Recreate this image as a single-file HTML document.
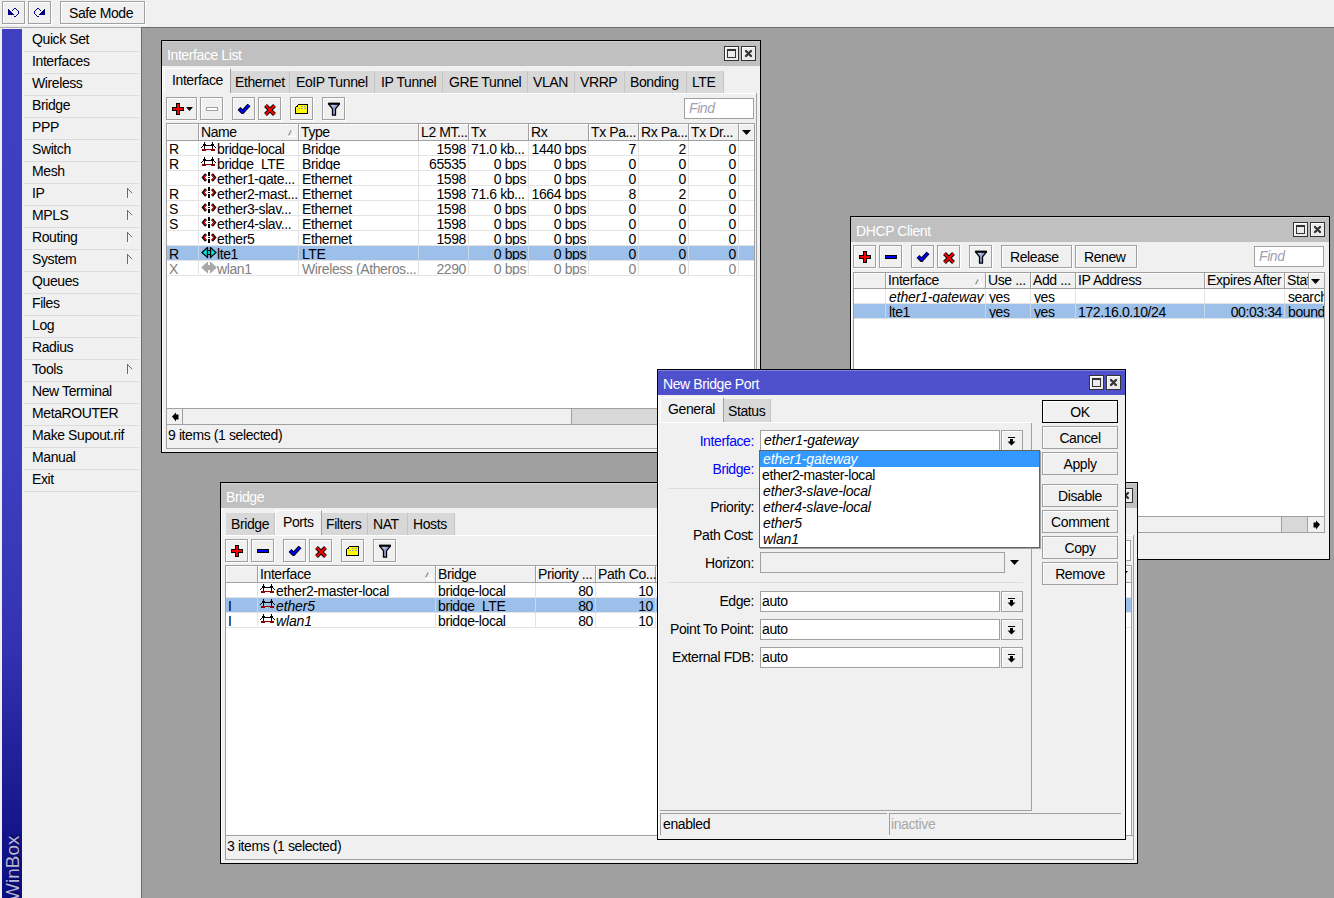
<!DOCTYPE html><html><head><meta charset="utf-8"><style>
*{margin:0;padding:0}
html,body{width:1334px;height:898px;overflow:hidden;background:#a0a0a0;position:relative;font-family:"Liberation Sans",sans-serif;font-size:13px;color:#000}
div,svg{position:absolute}
.t{white-space:pre;line-height:15px;font-size:14px;letter-spacing:-0.4px}
.i{font-style:italic}
</style></head><body>
<div style="left:0px;top:0px;width:1334px;height:27px;background:#f0f0f0"></div>
<div style="left:0px;top:27px;width:141px;height:1px;background:#a8a8a8"></div>
<div style="left:141px;top:27px;width:1193px;height:1px;background:#6c6c6c"></div>
<div style="left:2px;top:1px;width:23px;height:23px;border:1px solid #a0a0a0;box-sizing:border-box;background:#f0f0f0;box-shadow:inset 1px 1px #fff,1px 1px #fff;"></div>
<div style="left:28px;top:1px;width:23px;height:23px;border:1px solid #a0a0a0;box-sizing:border-box;background:#f0f0f0;box-shadow:inset 1px 1px #fff,1px 1px #fff;"></div>
<div style="left:60px;top:1px;width:85px;height:23px;border:1px solid #a0a0a0;box-sizing:border-box;background:#f0f0f0;box-shadow:inset 1px 1px #fff,1px 1px #fff;"></div>
<div class="t" style="left:69px;top:6px;">Safe Mode</div>
<svg style="left:0;top:0" width="56" height="28" shape-rendering="crispEdges">
<g fill="#000080">
<path d="M8 9h1v1h1v1h1v1h1v1h1v1h1v1h-6z"/>
<rect x="14" y="8" width="2" height="1"/><rect x="13" y="9" width="1" height="1"/><rect x="12" y="10" width="1" height="1"/>
<rect x="16" y="9" width="1" height="1"/><rect x="17" y="10" width="1" height="1"/><rect x="18" y="11" width="1" height="3"/>
<rect x="17" y="14" width="1" height="1"/><rect x="16" y="15" width="1" height="1"/><rect x="14" y="16" width="2" height="1"/>
</g>
<g fill="#000080" transform="translate(53,0) scale(-1,1)">
<path d="M8 9h1v1h1v1h1v1h1v1h1v1h1v1h-6z"/>
<rect x="14" y="8" width="2" height="1"/><rect x="13" y="9" width="1" height="1"/><rect x="12" y="10" width="1" height="1"/>
<rect x="16" y="9" width="1" height="1"/><rect x="17" y="10" width="1" height="1"/><rect x="18" y="11" width="1" height="3"/>
<rect x="17" y="14" width="1" height="1"/><rect x="16" y="15" width="1" height="1"/><rect x="14" y="16" width="2" height="1"/>
</g></svg>
<div style="left:0px;top:28px;width:141px;height:870px;background:#f0f0f0"></div>
<div style="left:2px;top:29px;width:20px;height:869px;background:linear-gradient(#3f40c0 0px,#3e3fc0 416px,#3333b2 616px,#22229c 716px,#15158c 796px,#0d0d82 869px)"></div>
<div class="t" style="left:-12px;top:866px;width:50px;height:20px;transform:rotate(-90deg);transform-origin:center;color:#b8b8d8;font-size:19px;line-height:20px;letter-spacing:0;text-shadow:1px 1px 1px #000040">WinBox</div>
<div class="t" style="left:32px;top:32px;">Quick Set</div>
<div style="left:24px;top:51px;width:115px;height:1px;background:#dcdcdc"></div>
<div class="t" style="left:32px;top:54px;">Interfaces</div>
<div style="left:24px;top:73px;width:115px;height:1px;background:#dcdcdc"></div>
<div class="t" style="left:32px;top:76px;">Wireless</div>
<div style="left:24px;top:95px;width:115px;height:1px;background:#dcdcdc"></div>
<div class="t" style="left:32px;top:98px;">Bridge</div>
<div style="left:24px;top:117px;width:115px;height:1px;background:#dcdcdc"></div>
<div class="t" style="left:32px;top:120px;">PPP</div>
<div style="left:24px;top:139px;width:115px;height:1px;background:#dcdcdc"></div>
<div class="t" style="left:32px;top:142px;">Switch</div>
<div style="left:24px;top:161px;width:115px;height:1px;background:#dcdcdc"></div>
<div class="t" style="left:32px;top:164px;">Mesh</div>
<div style="left:24px;top:183px;width:115px;height:1px;background:#dcdcdc"></div>
<div class="t" style="left:32px;top:186px;">IP</div>
<div style="left:24px;top:205px;width:115px;height:1px;background:#dcdcdc"></div>
<svg style="left:126px;top:188px" width="8" height="12" shape-rendering="crispEdges"><path d="M1 0v10" stroke="#6a6a6a" stroke-width="1" fill="none"/><path d="M1.5 0.5l5 5" stroke="#6a6a6a" fill="none" shape-rendering="auto"/><path d="M6.5 5.5l-5 5" stroke="#fff" fill="none" shape-rendering="auto"/></svg>
<div class="t" style="left:32px;top:208px;">MPLS</div>
<div style="left:24px;top:227px;width:115px;height:1px;background:#dcdcdc"></div>
<svg style="left:126px;top:210px" width="8" height="12" shape-rendering="crispEdges"><path d="M1 0v10" stroke="#6a6a6a" stroke-width="1" fill="none"/><path d="M1.5 0.5l5 5" stroke="#6a6a6a" fill="none" shape-rendering="auto"/><path d="M6.5 5.5l-5 5" stroke="#fff" fill="none" shape-rendering="auto"/></svg>
<div class="t" style="left:32px;top:230px;">Routing</div>
<div style="left:24px;top:249px;width:115px;height:1px;background:#dcdcdc"></div>
<svg style="left:126px;top:232px" width="8" height="12" shape-rendering="crispEdges"><path d="M1 0v10" stroke="#6a6a6a" stroke-width="1" fill="none"/><path d="M1.5 0.5l5 5" stroke="#6a6a6a" fill="none" shape-rendering="auto"/><path d="M6.5 5.5l-5 5" stroke="#fff" fill="none" shape-rendering="auto"/></svg>
<div class="t" style="left:32px;top:252px;">System</div>
<div style="left:24px;top:271px;width:115px;height:1px;background:#dcdcdc"></div>
<svg style="left:126px;top:254px" width="8" height="12" shape-rendering="crispEdges"><path d="M1 0v10" stroke="#6a6a6a" stroke-width="1" fill="none"/><path d="M1.5 0.5l5 5" stroke="#6a6a6a" fill="none" shape-rendering="auto"/><path d="M6.5 5.5l-5 5" stroke="#fff" fill="none" shape-rendering="auto"/></svg>
<div class="t" style="left:32px;top:274px;">Queues</div>
<div style="left:24px;top:293px;width:115px;height:1px;background:#dcdcdc"></div>
<div class="t" style="left:32px;top:296px;">Files</div>
<div style="left:24px;top:315px;width:115px;height:1px;background:#dcdcdc"></div>
<div class="t" style="left:32px;top:318px;">Log</div>
<div style="left:24px;top:337px;width:115px;height:1px;background:#dcdcdc"></div>
<div class="t" style="left:32px;top:340px;">Radius</div>
<div style="left:24px;top:359px;width:115px;height:1px;background:#dcdcdc"></div>
<div class="t" style="left:32px;top:362px;">Tools</div>
<div style="left:24px;top:381px;width:115px;height:1px;background:#dcdcdc"></div>
<svg style="left:126px;top:364px" width="8" height="12" shape-rendering="crispEdges"><path d="M1 0v10" stroke="#6a6a6a" stroke-width="1" fill="none"/><path d="M1.5 0.5l5 5" stroke="#6a6a6a" fill="none" shape-rendering="auto"/><path d="M6.5 5.5l-5 5" stroke="#fff" fill="none" shape-rendering="auto"/></svg>
<div class="t" style="left:32px;top:384px;">New Terminal</div>
<div style="left:24px;top:403px;width:115px;height:1px;background:#dcdcdc"></div>
<div class="t" style="left:32px;top:406px;">MetaROUTER</div>
<div style="left:24px;top:425px;width:115px;height:1px;background:#dcdcdc"></div>
<div class="t" style="left:32px;top:428px;">Make Supout.rif</div>
<div style="left:24px;top:447px;width:115px;height:1px;background:#dcdcdc"></div>
<div class="t" style="left:32px;top:450px;">Manual</div>
<div style="left:24px;top:469px;width:115px;height:1px;background:#dcdcdc"></div>
<div class="t" style="left:32px;top:472px;">Exit</div>
<div style="left:24px;top:491px;width:115px;height:1px;background:#dcdcdc"></div>
<div style="left:141px;top:28px;width:1px;height:870px;background:#6c6c6c"></div>
<div style="left:161px;top:40px;width:600px;height:413px;background:#000"></div>
<div style="left:162px;top:41px;width:598px;height:411px;background:#f0f0f0"></div>
<div style="left:162px;top:41px;width:598px;height:25px;background:#c0c0c0;border-top:1px solid #d0d0d0;box-sizing:border-box"></div>
<div style="left:162px;top:66px;width:1px;height:386px;background:#fff"></div>
<div class="t" style="left:167px;top:48px;color:#fff">Interface List</div>
<div style="left:724px;top:46px;width:15px;height:15px;border:1px solid #333;box-sizing:border-box;background:#eceaec;box-shadow:inset 1px 1px #fff"></div>
<div style="left:727px;top:49px;width:9px;height:9px;border:1px solid #333;border-top-width:2px;box-sizing:border-box"></div>
<div style="left:741px;top:46px;width:15px;height:15px;border:1px solid #333;box-sizing:border-box;background:#eceaec;box-shadow:inset 1px 1px #fff"></div>
<svg style="left:741px;top:46px" width="15" height="15"><path d="M5 5L10 10M10 5L5 10" stroke="#333" stroke-width="2.3" stroke-linecap="round"/></svg>
<div style="left:164px;top:68px;width:67px;height:25px;background:#f0f0f0;border-left:1px solid #fff;border-top:1px solid #fff;border-right:1px solid #a0a0a0;box-sizing:border-box"></div>
<div class="t" style="left:172px;top:73px;">Interface</div>
<div style="left:231px;top:71px;width:59px;height:22px;background:#d8d8d8;border-right:1px solid #c4c4c4;box-sizing:border-box"></div>
<div class="t" style="left:235px;top:75px;">Ethernet</div>
<div style="left:290px;top:71px;width:85px;height:22px;background:#d8d8d8;border-right:1px solid #c4c4c4;box-sizing:border-box"></div>
<div class="t" style="left:296px;top:75px;">EoIP Tunnel</div>
<div style="left:375px;top:71px;width:68px;height:22px;background:#d8d8d8;border-right:1px solid #c4c4c4;box-sizing:border-box"></div>
<div class="t" style="left:381px;top:75px;">IP Tunnel</div>
<div style="left:443px;top:71px;width:85px;height:22px;background:#d8d8d8;border-right:1px solid #c4c4c4;box-sizing:border-box"></div>
<div class="t" style="left:449px;top:75px;">GRE Tunnel</div>
<div style="left:528px;top:71px;width:47px;height:22px;background:#d8d8d8;border-right:1px solid #c4c4c4;box-sizing:border-box"></div>
<div class="t" style="left:533px;top:75px;">VLAN</div>
<div style="left:575px;top:71px;width:50px;height:22px;background:#d8d8d8;border-right:1px solid #c4c4c4;box-sizing:border-box"></div>
<div class="t" style="left:580px;top:75px;">VRRP</div>
<div style="left:625px;top:71px;width:62px;height:22px;background:#d8d8d8;border-right:1px solid #c4c4c4;box-sizing:border-box"></div>
<div class="t" style="left:630px;top:75px;">Bonding</div>
<div style="left:687px;top:71px;width:37px;height:22px;background:#d8d8d8;border-right:1px solid #c4c4c4;box-sizing:border-box"></div>
<div class="t" style="left:692px;top:75px;">LTE</div>
<div style="left:231px;top:93px;width:525px;height:1px;background:#fff"></div>
<div style="left:756px;top:93px;width:1px;height:357px;background:#a0a0a0"></div>
<div style="left:166px;top:97px;width:31px;height:23px;border:1px solid #a0a0a0;box-sizing:border-box;background:#f0f0f0;box-shadow:inset 1px 1px #fff,1px 1px #fff;"></div>
<svg style="left:172px;top:103px" width="22" height="12" shape-rendering="crispEdges"><path d="M4.5 0.5h3v4h4v3h-4v4h-3v-4h-4v-3h4z" fill="#ff0000" stroke="#000"/><path d="M14 4h7l-3.5 4z" fill="#000" shape-rendering="auto"/></svg>
<div style="left:200px;top:97px;width:23px;height:23px;border:1px solid #a0a0a0;box-sizing:border-box;background:#f0f0f0;box-shadow:inset 1px 1px #fff,1px 1px #fff;"></div>
<svg style="left:206px;top:107px" width="12" height="4" shape-rendering="crispEdges"><rect x="0.5" y="0.5" width="11" height="3" fill="#fff" stroke="#a0a0a0"/></svg>
<div style="left:232px;top:97px;width:23px;height:23px;border:1px solid #a0a0a0;box-sizing:border-box;background:#f0f0f0;box-shadow:inset 1px 1px #fff,1px 1px #fff;"></div>
<svg style="left:237px;top:102px" width="14" height="12"><path d="M2 6.5L5.5 10L12 3" fill="none" stroke="#000" stroke-width="4" stroke-linejoin="miter"/><path d="M2 6.5L5.5 10L12 3" fill="none" stroke="#0000ff" stroke-width="2"/></svg>
<div style="left:258px;top:97px;width:23px;height:23px;border:1px solid #a0a0a0;box-sizing:border-box;background:#f0f0f0;box-shadow:inset 1px 1px #fff,1px 1px #fff;"></div>
<svg style="left:264px;top:104px" width="12" height="12"><path d="M1.5 1.5L10.5 10.5M10.5 1.5L1.5 10.5" fill="none" stroke="#000" stroke-width="4"/><path d="M1.5 1.5L10.5 10.5M10.5 1.5L1.5 10.5" fill="none" stroke="#ff0000" stroke-width="2"/></svg>
<div style="left:290px;top:97px;width:23px;height:23px;border:1px solid #a0a0a0;box-sizing:border-box;background:#f0f0f0;box-shadow:inset 1px 1px #fff,1px 1px #fff;"></div>
<svg style="left:295px;top:104px" width="14" height="11" shape-rendering="crispEdges"><path d="M3.5 0.5h9v9h-12v-6z" fill="#ffff00" stroke="#000"/><rect x="6" y="2" width="2" height="1" fill="#a0a0c0"/><rect x="9" y="2" width="2" height="1" fill="#a0a0c0"/><rect x="3" y="4" width="2" height="1" fill="#a0a0c0"/><rect x="6" y="4" width="2" height="1" fill="#a0a0c0"/><rect x="9" y="4" width="2" height="1" fill="#a0a0c0"/><rect x="2" y="2" width="1" height="1" fill="#000"/></svg>
<div style="left:322px;top:97px;width:23px;height:23px;border:1px solid #a0a0a0;box-sizing:border-box;background:#f0f0f0;box-shadow:inset 1px 1px #fff,1px 1px #fff;"></div>
<svg style="left:327px;top:102px" width="14" height="15"><path d="M1.5 1.8h11l-4 5v6.4h-3v-6.4z" fill="#94a4d4" stroke="#000" stroke-width="1.3" stroke-linejoin="round"/><path d="M1.2 1.6h11.6" stroke="#000" stroke-width="2"/><path d="M4 3h3.5l-1.2 2z" fill="#c8d0ec"/></svg>
<div style="left:684px;top:98px;width:70px;height:21px;background:#fff;border:1px solid #a0a0a0;box-sizing:border-box"></div>
<div class="t" style="left:689px;top:101px;color:#a0a0b0;font-style:italic">Find</div>
<div style="left:166px;top:123px;width:589px;height:285px;background:#fff;border:1px solid #a0a0a0;border-bottom:none;box-sizing:border-box"></div>
<div style="left:166px;top:123px;width:589px;height:18px;background:#f0f0f0;border-top:1px solid #a0a0a0;border-left:1px solid #a0a0a0;border-right:1px solid #a0a0a0;border-bottom:1px solid #a0a0a0;box-sizing:border-box;box-shadow:inset 1px 1px #fff"></div>
<div style="left:198px;top:123px;width:1px;height:18px;background:#a0a0a0"></div>
<div style="left:199px;top:124px;width:1px;height:16px;background:#fff"></div>
<div style="left:298px;top:123px;width:1px;height:18px;background:#a0a0a0"></div>
<div style="left:299px;top:124px;width:1px;height:16px;background:#fff"></div>
<div style="left:418px;top:123px;width:1px;height:18px;background:#a0a0a0"></div>
<div style="left:419px;top:124px;width:1px;height:16px;background:#fff"></div>
<div style="left:468px;top:123px;width:1px;height:18px;background:#a0a0a0"></div>
<div style="left:469px;top:124px;width:1px;height:16px;background:#fff"></div>
<div style="left:528px;top:123px;width:1px;height:18px;background:#a0a0a0"></div>
<div style="left:529px;top:124px;width:1px;height:16px;background:#fff"></div>
<div style="left:588px;top:123px;width:1px;height:18px;background:#a0a0a0"></div>
<div style="left:589px;top:124px;width:1px;height:16px;background:#fff"></div>
<div style="left:638px;top:123px;width:1px;height:18px;background:#a0a0a0"></div>
<div style="left:639px;top:124px;width:1px;height:16px;background:#fff"></div>
<div style="left:688px;top:123px;width:1px;height:18px;background:#a0a0a0"></div>
<div style="left:689px;top:124px;width:1px;height:16px;background:#fff"></div>
<div style="left:738px;top:123px;width:1px;height:18px;background:#a0a0a0"></div>
<div style="left:739px;top:124px;width:1px;height:16px;background:#fff"></div>
<div class="t" style="left:201px;top:125px;">Name</div>
<div class="t" style="left:301px;top:125px;">Type</div>
<div class="t" style="left:421px;top:125px;">L2 MT...</div>
<div class="t" style="left:471px;top:125px;">Tx</div>
<div class="t" style="left:531px;top:125px;">Rx</div>
<div class="t" style="left:591px;top:125px;">Tx Pa...</div>
<div class="t" style="left:641px;top:125px;">Rx Pa...</div>
<div class="t" style="left:691px;top:125px;">Tx Dr...</div>
<svg style="left:742px;top:130px" width="9" height="5"><path d="M0 0h9l-4.5 5z" fill="#000"/></svg>
<svg style="left:287px;top:128px" width="10" height="10"><path d="M4.5 2L1.5 7.5" stroke="#909090" stroke-width="1.3" fill="none"/><path d="M4.6 1.5L8.5 8.5H1" stroke="#fff" stroke-width="1.3" fill="none"/></svg>
<div style="left:167px;top:155px;width:587px;height:1px;background:#e4e4e4"></div>
<div style="left:198px;top:141px;width:1px;height:15px;background:#e4e4e4"></div>
<div style="left:298px;top:141px;width:1px;height:15px;background:#e4e4e4"></div>
<div style="left:418px;top:141px;width:1px;height:15px;background:#e4e4e4"></div>
<div style="left:468px;top:141px;width:1px;height:15px;background:#e4e4e4"></div>
<div style="left:528px;top:141px;width:1px;height:15px;background:#e4e4e4"></div>
<div style="left:588px;top:141px;width:1px;height:15px;background:#e4e4e4"></div>
<div style="left:638px;top:141px;width:1px;height:15px;background:#e4e4e4"></div>
<div style="left:688px;top:141px;width:1px;height:15px;background:#e4e4e4"></div>
<div style="left:738px;top:141px;width:1px;height:15px;background:#e4e4e4"></div>
<div style="left:167px;top:141px;width:31px;height:14px;overflow:hidden"><div class="t" style="left:2px;top:1px;">R</div></div>
<div style="left:299px;top:141px;width:119px;height:14px;overflow:hidden"><div class="t" style="left:3px;top:1px;">Bridge</div></div>
<div style="left:199px;top:141px;width:99px;height:14px;overflow:hidden"><div class="t" style="left:18px;top:1px;">bridge-local</div></div>
<svg style="left:201px;top:142px" width="15" height="10" shape-rendering="crispEdges"><rect x="3" y="0" width="1" height="7" fill="#000"/><rect x="11" y="0" width="1" height="7" fill="#000"/><rect x="2" y="2" width="3" height="2" fill="#000"/><rect x="10" y="2" width="3" height="2" fill="#000"/><rect x="5" y="3" width="5" height="1" fill="#000"/><rect x="1" y="4" width="1" height="1" fill="#000"/><rect x="0" y="5" width="1" height="1" fill="#000"/><rect x="13" y="4" width="1" height="1" fill="#000"/><rect x="14" y="5" width="1" height="1" fill="#000"/><rect x="1" y="7" width="13" height="1" fill="#8b0000"/><rect x="1" y="8" width="4" height="1" fill="#8b0000"/><rect x="10" y="8" width="4" height="1" fill="#8b0000"/></svg>
<div style="left:419px;top:141px;width:49px;height:14px;overflow:hidden"><div class="t" style="right:2px;top:1px;">1598</div></div>
<div style="left:469px;top:141px;width:59px;height:14px;overflow:hidden"><div class="t" style="left:2px;top:1px;">71.0 kb...</div></div>
<div style="left:529px;top:141px;width:59px;height:14px;overflow:hidden"><div class="t" style="right:2px;top:1px;">1440 bps</div></div>
<div style="left:589px;top:141px;width:49px;height:14px;overflow:hidden"><div class="t" style="right:2px;top:1px;">7</div></div>
<div style="left:639px;top:141px;width:49px;height:14px;overflow:hidden"><div class="t" style="right:2px;top:1px;">2</div></div>
<div style="left:689px;top:141px;width:49px;height:14px;overflow:hidden"><div class="t" style="right:2px;top:1px;">0</div></div>
<div style="left:167px;top:170px;width:587px;height:1px;background:#e4e4e4"></div>
<div style="left:198px;top:156px;width:1px;height:15px;background:#e4e4e4"></div>
<div style="left:298px;top:156px;width:1px;height:15px;background:#e4e4e4"></div>
<div style="left:418px;top:156px;width:1px;height:15px;background:#e4e4e4"></div>
<div style="left:468px;top:156px;width:1px;height:15px;background:#e4e4e4"></div>
<div style="left:528px;top:156px;width:1px;height:15px;background:#e4e4e4"></div>
<div style="left:588px;top:156px;width:1px;height:15px;background:#e4e4e4"></div>
<div style="left:638px;top:156px;width:1px;height:15px;background:#e4e4e4"></div>
<div style="left:688px;top:156px;width:1px;height:15px;background:#e4e4e4"></div>
<div style="left:738px;top:156px;width:1px;height:15px;background:#e4e4e4"></div>
<div style="left:167px;top:156px;width:31px;height:14px;overflow:hidden"><div class="t" style="left:2px;top:1px;">R</div></div>
<div style="left:299px;top:156px;width:119px;height:14px;overflow:hidden"><div class="t" style="left:3px;top:1px;">Bridge</div></div>
<div style="left:199px;top:156px;width:99px;height:14px;overflow:hidden"><div class="t" style="left:18px;top:1px;">bridge_LTE</div></div>
<svg style="left:201px;top:157px" width="15" height="10" shape-rendering="crispEdges"><rect x="3" y="0" width="1" height="7" fill="#000"/><rect x="11" y="0" width="1" height="7" fill="#000"/><rect x="2" y="2" width="3" height="2" fill="#000"/><rect x="10" y="2" width="3" height="2" fill="#000"/><rect x="5" y="3" width="5" height="1" fill="#000"/><rect x="1" y="4" width="1" height="1" fill="#000"/><rect x="0" y="5" width="1" height="1" fill="#000"/><rect x="13" y="4" width="1" height="1" fill="#000"/><rect x="14" y="5" width="1" height="1" fill="#000"/><rect x="1" y="7" width="13" height="1" fill="#8b0000"/><rect x="1" y="8" width="4" height="1" fill="#8b0000"/><rect x="10" y="8" width="4" height="1" fill="#8b0000"/></svg>
<div style="left:419px;top:156px;width:49px;height:14px;overflow:hidden"><div class="t" style="right:2px;top:1px;">65535</div></div>
<div style="left:469px;top:156px;width:59px;height:14px;overflow:hidden"><div class="t" style="right:2px;top:1px;">0 bps</div></div>
<div style="left:529px;top:156px;width:59px;height:14px;overflow:hidden"><div class="t" style="right:2px;top:1px;">0 bps</div></div>
<div style="left:589px;top:156px;width:49px;height:14px;overflow:hidden"><div class="t" style="right:2px;top:1px;">0</div></div>
<div style="left:639px;top:156px;width:49px;height:14px;overflow:hidden"><div class="t" style="right:2px;top:1px;">0</div></div>
<div style="left:689px;top:156px;width:49px;height:14px;overflow:hidden"><div class="t" style="right:2px;top:1px;">0</div></div>
<div style="left:167px;top:185px;width:587px;height:1px;background:#e4e4e4"></div>
<div style="left:198px;top:171px;width:1px;height:15px;background:#e4e4e4"></div>
<div style="left:298px;top:171px;width:1px;height:15px;background:#e4e4e4"></div>
<div style="left:418px;top:171px;width:1px;height:15px;background:#e4e4e4"></div>
<div style="left:468px;top:171px;width:1px;height:15px;background:#e4e4e4"></div>
<div style="left:528px;top:171px;width:1px;height:15px;background:#e4e4e4"></div>
<div style="left:588px;top:171px;width:1px;height:15px;background:#e4e4e4"></div>
<div style="left:638px;top:171px;width:1px;height:15px;background:#e4e4e4"></div>
<div style="left:688px;top:171px;width:1px;height:15px;background:#e4e4e4"></div>
<div style="left:738px;top:171px;width:1px;height:15px;background:#e4e4e4"></div>
<div style="left:167px;top:171px;width:31px;height:14px;overflow:hidden"><div class="t" style="left:2px;top:1px;"></div></div>
<div style="left:299px;top:171px;width:119px;height:14px;overflow:hidden"><div class="t" style="left:3px;top:1px;">Ethernet</div></div>
<div style="left:199px;top:171px;width:99px;height:14px;overflow:hidden"><div class="t" style="left:18px;top:1px;">ether1-gate...</div></div>
<svg style="left:201px;top:172px" width="16" height="12"><path d="M5 2.2L2.2 5.5L5 8.8M11 2.2L13.8 5.5L11 8.8" fill="none" stroke="#000" stroke-width="2.6" stroke-linejoin="miter" stroke-miterlimit="3"/><path d="M5 2.9L2.9 5.5L5 8.1M11 2.9L13.1 5.5L11 8.1" fill="none" stroke="#f00" stroke-width="1.1"/><g shape-rendering="crispEdges" fill="#000"><rect x="7" y="0" width="2" height="4"/><rect x="7" y="5" width="2" height="1"/><rect x="7" y="7" width="2" height="4"/></g></svg>
<div style="left:419px;top:171px;width:49px;height:14px;overflow:hidden"><div class="t" style="right:2px;top:1px;">1598</div></div>
<div style="left:469px;top:171px;width:59px;height:14px;overflow:hidden"><div class="t" style="right:2px;top:1px;">0 bps</div></div>
<div style="left:529px;top:171px;width:59px;height:14px;overflow:hidden"><div class="t" style="right:2px;top:1px;">0 bps</div></div>
<div style="left:589px;top:171px;width:49px;height:14px;overflow:hidden"><div class="t" style="right:2px;top:1px;">0</div></div>
<div style="left:639px;top:171px;width:49px;height:14px;overflow:hidden"><div class="t" style="right:2px;top:1px;">0</div></div>
<div style="left:689px;top:171px;width:49px;height:14px;overflow:hidden"><div class="t" style="right:2px;top:1px;">0</div></div>
<div style="left:167px;top:200px;width:587px;height:1px;background:#e4e4e4"></div>
<div style="left:198px;top:186px;width:1px;height:15px;background:#e4e4e4"></div>
<div style="left:298px;top:186px;width:1px;height:15px;background:#e4e4e4"></div>
<div style="left:418px;top:186px;width:1px;height:15px;background:#e4e4e4"></div>
<div style="left:468px;top:186px;width:1px;height:15px;background:#e4e4e4"></div>
<div style="left:528px;top:186px;width:1px;height:15px;background:#e4e4e4"></div>
<div style="left:588px;top:186px;width:1px;height:15px;background:#e4e4e4"></div>
<div style="left:638px;top:186px;width:1px;height:15px;background:#e4e4e4"></div>
<div style="left:688px;top:186px;width:1px;height:15px;background:#e4e4e4"></div>
<div style="left:738px;top:186px;width:1px;height:15px;background:#e4e4e4"></div>
<div style="left:167px;top:186px;width:31px;height:14px;overflow:hidden"><div class="t" style="left:2px;top:1px;">R</div></div>
<div style="left:299px;top:186px;width:119px;height:14px;overflow:hidden"><div class="t" style="left:3px;top:1px;">Ethernet</div></div>
<div style="left:199px;top:186px;width:99px;height:14px;overflow:hidden"><div class="t" style="left:18px;top:1px;">ether2-mast...</div></div>
<svg style="left:201px;top:187px" width="16" height="12"><path d="M5 2.2L2.2 5.5L5 8.8M11 2.2L13.8 5.5L11 8.8" fill="none" stroke="#000" stroke-width="2.6" stroke-linejoin="miter" stroke-miterlimit="3"/><path d="M5 2.9L2.9 5.5L5 8.1M11 2.9L13.1 5.5L11 8.1" fill="none" stroke="#f00" stroke-width="1.1"/><g shape-rendering="crispEdges" fill="#000"><rect x="7" y="0" width="2" height="4"/><rect x="7" y="5" width="2" height="1"/><rect x="7" y="7" width="2" height="4"/></g></svg>
<div style="left:419px;top:186px;width:49px;height:14px;overflow:hidden"><div class="t" style="right:2px;top:1px;">1598</div></div>
<div style="left:469px;top:186px;width:59px;height:14px;overflow:hidden"><div class="t" style="left:2px;top:1px;">71.6 kb...</div></div>
<div style="left:529px;top:186px;width:59px;height:14px;overflow:hidden"><div class="t" style="right:2px;top:1px;">1664 bps</div></div>
<div style="left:589px;top:186px;width:49px;height:14px;overflow:hidden"><div class="t" style="right:2px;top:1px;">8</div></div>
<div style="left:639px;top:186px;width:49px;height:14px;overflow:hidden"><div class="t" style="right:2px;top:1px;">2</div></div>
<div style="left:689px;top:186px;width:49px;height:14px;overflow:hidden"><div class="t" style="right:2px;top:1px;">0</div></div>
<div style="left:167px;top:215px;width:587px;height:1px;background:#e4e4e4"></div>
<div style="left:198px;top:201px;width:1px;height:15px;background:#e4e4e4"></div>
<div style="left:298px;top:201px;width:1px;height:15px;background:#e4e4e4"></div>
<div style="left:418px;top:201px;width:1px;height:15px;background:#e4e4e4"></div>
<div style="left:468px;top:201px;width:1px;height:15px;background:#e4e4e4"></div>
<div style="left:528px;top:201px;width:1px;height:15px;background:#e4e4e4"></div>
<div style="left:588px;top:201px;width:1px;height:15px;background:#e4e4e4"></div>
<div style="left:638px;top:201px;width:1px;height:15px;background:#e4e4e4"></div>
<div style="left:688px;top:201px;width:1px;height:15px;background:#e4e4e4"></div>
<div style="left:738px;top:201px;width:1px;height:15px;background:#e4e4e4"></div>
<div style="left:167px;top:201px;width:31px;height:14px;overflow:hidden"><div class="t" style="left:2px;top:1px;">S</div></div>
<div style="left:299px;top:201px;width:119px;height:14px;overflow:hidden"><div class="t" style="left:3px;top:1px;">Ethernet</div></div>
<div style="left:199px;top:201px;width:99px;height:14px;overflow:hidden"><div class="t" style="left:18px;top:1px;">ether3-slav...</div></div>
<svg style="left:201px;top:202px" width="16" height="12"><path d="M5 2.2L2.2 5.5L5 8.8M11 2.2L13.8 5.5L11 8.8" fill="none" stroke="#000" stroke-width="2.6" stroke-linejoin="miter" stroke-miterlimit="3"/><path d="M5 2.9L2.9 5.5L5 8.1M11 2.9L13.1 5.5L11 8.1" fill="none" stroke="#f00" stroke-width="1.1"/><g shape-rendering="crispEdges" fill="#000"><rect x="7" y="0" width="2" height="4"/><rect x="7" y="5" width="2" height="1"/><rect x="7" y="7" width="2" height="4"/></g></svg>
<div style="left:419px;top:201px;width:49px;height:14px;overflow:hidden"><div class="t" style="right:2px;top:1px;">1598</div></div>
<div style="left:469px;top:201px;width:59px;height:14px;overflow:hidden"><div class="t" style="right:2px;top:1px;">0 bps</div></div>
<div style="left:529px;top:201px;width:59px;height:14px;overflow:hidden"><div class="t" style="right:2px;top:1px;">0 bps</div></div>
<div style="left:589px;top:201px;width:49px;height:14px;overflow:hidden"><div class="t" style="right:2px;top:1px;">0</div></div>
<div style="left:639px;top:201px;width:49px;height:14px;overflow:hidden"><div class="t" style="right:2px;top:1px;">0</div></div>
<div style="left:689px;top:201px;width:49px;height:14px;overflow:hidden"><div class="t" style="right:2px;top:1px;">0</div></div>
<div style="left:167px;top:230px;width:587px;height:1px;background:#e4e4e4"></div>
<div style="left:198px;top:216px;width:1px;height:15px;background:#e4e4e4"></div>
<div style="left:298px;top:216px;width:1px;height:15px;background:#e4e4e4"></div>
<div style="left:418px;top:216px;width:1px;height:15px;background:#e4e4e4"></div>
<div style="left:468px;top:216px;width:1px;height:15px;background:#e4e4e4"></div>
<div style="left:528px;top:216px;width:1px;height:15px;background:#e4e4e4"></div>
<div style="left:588px;top:216px;width:1px;height:15px;background:#e4e4e4"></div>
<div style="left:638px;top:216px;width:1px;height:15px;background:#e4e4e4"></div>
<div style="left:688px;top:216px;width:1px;height:15px;background:#e4e4e4"></div>
<div style="left:738px;top:216px;width:1px;height:15px;background:#e4e4e4"></div>
<div style="left:167px;top:216px;width:31px;height:14px;overflow:hidden"><div class="t" style="left:2px;top:1px;">S</div></div>
<div style="left:299px;top:216px;width:119px;height:14px;overflow:hidden"><div class="t" style="left:3px;top:1px;">Ethernet</div></div>
<div style="left:199px;top:216px;width:99px;height:14px;overflow:hidden"><div class="t" style="left:18px;top:1px;">ether4-slav...</div></div>
<svg style="left:201px;top:217px" width="16" height="12"><path d="M5 2.2L2.2 5.5L5 8.8M11 2.2L13.8 5.5L11 8.8" fill="none" stroke="#000" stroke-width="2.6" stroke-linejoin="miter" stroke-miterlimit="3"/><path d="M5 2.9L2.9 5.5L5 8.1M11 2.9L13.1 5.5L11 8.1" fill="none" stroke="#f00" stroke-width="1.1"/><g shape-rendering="crispEdges" fill="#000"><rect x="7" y="0" width="2" height="4"/><rect x="7" y="5" width="2" height="1"/><rect x="7" y="7" width="2" height="4"/></g></svg>
<div style="left:419px;top:216px;width:49px;height:14px;overflow:hidden"><div class="t" style="right:2px;top:1px;">1598</div></div>
<div style="left:469px;top:216px;width:59px;height:14px;overflow:hidden"><div class="t" style="right:2px;top:1px;">0 bps</div></div>
<div style="left:529px;top:216px;width:59px;height:14px;overflow:hidden"><div class="t" style="right:2px;top:1px;">0 bps</div></div>
<div style="left:589px;top:216px;width:49px;height:14px;overflow:hidden"><div class="t" style="right:2px;top:1px;">0</div></div>
<div style="left:639px;top:216px;width:49px;height:14px;overflow:hidden"><div class="t" style="right:2px;top:1px;">0</div></div>
<div style="left:689px;top:216px;width:49px;height:14px;overflow:hidden"><div class="t" style="right:2px;top:1px;">0</div></div>
<div style="left:167px;top:245px;width:587px;height:1px;background:#e4e4e4"></div>
<div style="left:198px;top:231px;width:1px;height:15px;background:#e4e4e4"></div>
<div style="left:298px;top:231px;width:1px;height:15px;background:#e4e4e4"></div>
<div style="left:418px;top:231px;width:1px;height:15px;background:#e4e4e4"></div>
<div style="left:468px;top:231px;width:1px;height:15px;background:#e4e4e4"></div>
<div style="left:528px;top:231px;width:1px;height:15px;background:#e4e4e4"></div>
<div style="left:588px;top:231px;width:1px;height:15px;background:#e4e4e4"></div>
<div style="left:638px;top:231px;width:1px;height:15px;background:#e4e4e4"></div>
<div style="left:688px;top:231px;width:1px;height:15px;background:#e4e4e4"></div>
<div style="left:738px;top:231px;width:1px;height:15px;background:#e4e4e4"></div>
<div style="left:167px;top:231px;width:31px;height:14px;overflow:hidden"><div class="t" style="left:2px;top:1px;"></div></div>
<div style="left:299px;top:231px;width:119px;height:14px;overflow:hidden"><div class="t" style="left:3px;top:1px;">Ethernet</div></div>
<div style="left:199px;top:231px;width:99px;height:14px;overflow:hidden"><div class="t" style="left:18px;top:1px;">ether5</div></div>
<svg style="left:201px;top:232px" width="16" height="12"><path d="M5 2.2L2.2 5.5L5 8.8M11 2.2L13.8 5.5L11 8.8" fill="none" stroke="#000" stroke-width="2.6" stroke-linejoin="miter" stroke-miterlimit="3"/><path d="M5 2.9L2.9 5.5L5 8.1M11 2.9L13.1 5.5L11 8.1" fill="none" stroke="#f00" stroke-width="1.1"/><g shape-rendering="crispEdges" fill="#000"><rect x="7" y="0" width="2" height="4"/><rect x="7" y="5" width="2" height="1"/><rect x="7" y="7" width="2" height="4"/></g></svg>
<div style="left:419px;top:231px;width:49px;height:14px;overflow:hidden"><div class="t" style="right:2px;top:1px;">1598</div></div>
<div style="left:469px;top:231px;width:59px;height:14px;overflow:hidden"><div class="t" style="right:2px;top:1px;">0 bps</div></div>
<div style="left:529px;top:231px;width:59px;height:14px;overflow:hidden"><div class="t" style="right:2px;top:1px;">0 bps</div></div>
<div style="left:589px;top:231px;width:49px;height:14px;overflow:hidden"><div class="t" style="right:2px;top:1px;">0</div></div>
<div style="left:639px;top:231px;width:49px;height:14px;overflow:hidden"><div class="t" style="right:2px;top:1px;">0</div></div>
<div style="left:689px;top:231px;width:49px;height:14px;overflow:hidden"><div class="t" style="right:2px;top:1px;">0</div></div>
<div style="left:167px;top:246px;width:587px;height:15px;background:#9dc0ea"></div>
<div style="left:167px;top:260px;width:587px;height:1px;background:#e4e4e4"></div>
<div style="left:198px;top:246px;width:1px;height:15px;background:#c8d8ea"></div>
<div style="left:298px;top:246px;width:1px;height:15px;background:#c8d8ea"></div>
<div style="left:418px;top:246px;width:1px;height:15px;background:#c8d8ea"></div>
<div style="left:468px;top:246px;width:1px;height:15px;background:#c8d8ea"></div>
<div style="left:528px;top:246px;width:1px;height:15px;background:#c8d8ea"></div>
<div style="left:588px;top:246px;width:1px;height:15px;background:#c8d8ea"></div>
<div style="left:638px;top:246px;width:1px;height:15px;background:#c8d8ea"></div>
<div style="left:688px;top:246px;width:1px;height:15px;background:#c8d8ea"></div>
<div style="left:738px;top:246px;width:1px;height:15px;background:#c8d8ea"></div>
<div style="left:167px;top:246px;width:31px;height:14px;overflow:hidden"><div class="t" style="left:2px;top:1px;">R</div></div>
<div style="left:299px;top:246px;width:119px;height:14px;overflow:hidden"><div class="t" style="left:3px;top:1px;">LTE</div></div>
<div style="left:199px;top:246px;width:99px;height:14px;overflow:hidden"><div class="t" style="left:18px;top:1px;">lte1</div></div>
<svg style="left:201px;top:247px" width="16" height="12"><path d="M1 5.5L6.5 0.5V3.5H9.5V0.5L15 5.5L9.5 10.5V7.5H6.5V10.5Z" fill="#00e8e8" stroke="#000" stroke-width="1.2" stroke-linejoin="miter"/><path d="M6.5 0.5V10.5M9.5 0.5V10.5" stroke="#000" stroke-width="1.3"/></svg>
<div style="left:419px;top:246px;width:49px;height:14px;overflow:hidden"><div class="t" style="right:2px;top:1px;"></div></div>
<div style="left:469px;top:246px;width:59px;height:14px;overflow:hidden"><div class="t" style="right:2px;top:1px;">0 bps</div></div>
<div style="left:529px;top:246px;width:59px;height:14px;overflow:hidden"><div class="t" style="right:2px;top:1px;">0 bps</div></div>
<div style="left:589px;top:246px;width:49px;height:14px;overflow:hidden"><div class="t" style="right:2px;top:1px;">0</div></div>
<div style="left:639px;top:246px;width:49px;height:14px;overflow:hidden"><div class="t" style="right:2px;top:1px;">0</div></div>
<div style="left:689px;top:246px;width:49px;height:14px;overflow:hidden"><div class="t" style="right:2px;top:1px;">0</div></div>
<div style="left:167px;top:275px;width:587px;height:1px;background:#e4e4e4"></div>
<div style="left:198px;top:261px;width:1px;height:15px;background:#e4e4e4"></div>
<div style="left:298px;top:261px;width:1px;height:15px;background:#e4e4e4"></div>
<div style="left:418px;top:261px;width:1px;height:15px;background:#e4e4e4"></div>
<div style="left:468px;top:261px;width:1px;height:15px;background:#e4e4e4"></div>
<div style="left:528px;top:261px;width:1px;height:15px;background:#e4e4e4"></div>
<div style="left:588px;top:261px;width:1px;height:15px;background:#e4e4e4"></div>
<div style="left:638px;top:261px;width:1px;height:15px;background:#e4e4e4"></div>
<div style="left:688px;top:261px;width:1px;height:15px;background:#e4e4e4"></div>
<div style="left:738px;top:261px;width:1px;height:15px;background:#e4e4e4"></div>
<div style="left:167px;top:261px;width:31px;height:14px;overflow:hidden"><div class="t" style="left:2px;top:1px;color:#808080">X</div></div>
<div style="left:299px;top:261px;width:119px;height:14px;overflow:hidden"><div class="t" style="left:3px;top:1px;color:#808080">Wireless (Atheros...</div></div>
<div style="left:199px;top:261px;width:99px;height:14px;overflow:hidden"><div class="t" style="left:18px;top:1px;color:#808080">wlan1</div></div>
<svg style="left:201px;top:262px" width="16" height="12"><path d="M1 5.5L6.5 0.5V3.5H9.5V0.5L15 5.5L9.5 10.5V7.5H6.5V10.5Z" fill="#a8a8a8" stroke="#a8a8a8" stroke-width="1.2" stroke-linejoin="miter"/></svg>
<div style="left:419px;top:261px;width:49px;height:14px;overflow:hidden"><div class="t" style="right:2px;top:1px;color:#808080">2290</div></div>
<div style="left:469px;top:261px;width:59px;height:14px;overflow:hidden"><div class="t" style="right:2px;top:1px;color:#808080">0 bps</div></div>
<div style="left:529px;top:261px;width:59px;height:14px;overflow:hidden"><div class="t" style="right:2px;top:1px;color:#808080">0 bps</div></div>
<div style="left:589px;top:261px;width:49px;height:14px;overflow:hidden"><div class="t" style="right:2px;top:1px;color:#808080">0</div></div>
<div style="left:639px;top:261px;width:49px;height:14px;overflow:hidden"><div class="t" style="right:2px;top:1px;color:#808080">0</div></div>
<div style="left:689px;top:261px;width:49px;height:14px;overflow:hidden"><div class="t" style="right:2px;top:1px;color:#808080">0</div></div>
<div style="left:166px;top:408px;width:589px;height:17px;background:#f0f0f0;border:1px solid #a0a0a0;border-left:1px solid #a0a0a0;box-sizing:border-box"></div>
<div style="left:182px;top:409px;width:1px;height:15px;background:#a0a0a0"></div>
<svg style="left:172px;top:412px" width="7" height="10"><path d="M0 4.5L4 0.5v2h2.5v5h-2.5v2z" fill="#000"/></svg>
<div style="left:571px;top:409px;width:190px;height:15px;background:#d8d8d8;border-left:1px solid #a0a0a0;box-sizing:border-box"></div>
<div style="left:166px;top:425px;width:592px;height:24px;border-left:1px solid #a0a0a0;border-bottom:1px solid #a0a0a0;box-sizing:border-box"></div>
<div class="t" style="left:168px;top:428px;">9 items (1 selected)</div>
<div style="left:850px;top:216px;width:480px;height:344px;background:#000"></div>
<div style="left:851px;top:217px;width:478px;height:342px;background:#f0f0f0"></div>
<div style="left:851px;top:217px;width:478px;height:25px;background:#c0c0c0;border-top:1px solid #d0d0d0;box-sizing:border-box"></div>
<div style="left:851px;top:242px;width:1px;height:317px;background:#fff"></div>
<div class="t" style="left:856px;top:224px;color:#fff">DHCP Client</div>
<div style="left:1293px;top:222px;width:15px;height:15px;border:1px solid #333;box-sizing:border-box;background:#eceaec;box-shadow:inset 1px 1px #fff"></div>
<div style="left:1296px;top:225px;width:9px;height:9px;border:1px solid #333;border-top-width:2px;box-sizing:border-box"></div>
<div style="left:1310px;top:222px;width:15px;height:15px;border:1px solid #333;box-sizing:border-box;background:#eceaec;box-shadow:inset 1px 1px #fff"></div>
<svg style="left:1310px;top:222px" width="15" height="15"><path d="M5 5L10 10M10 5L5 10" stroke="#333" stroke-width="2.3" stroke-linecap="round"/></svg>
<div style="left:851px;top:242px;width:1px;height:317px;background:#fff"></div>
<div style="left:853px;top:245px;width:23px;height:23px;border:1px solid #a0a0a0;box-sizing:border-box;background:#f0f0f0;box-shadow:inset 1px 1px #fff,1px 1px #fff;"></div>
<svg style="left:859px;top:251px" width="22" height="12" shape-rendering="crispEdges"><path d="M4.5 0.5h3v4h4v3h-4v4h-3v-4h-4v-3h4z" fill="#ff0000" stroke="#000"/></svg>
<div style="left:879px;top:245px;width:23px;height:23px;border:1px solid #a0a0a0;box-sizing:border-box;background:#f0f0f0;box-shadow:inset 1px 1px #fff,1px 1px #fff;"></div>
<svg style="left:885px;top:255px" width="12" height="4" shape-rendering="crispEdges"><rect x="0.5" y="0.5" width="11" height="3" fill="#0000ff" stroke="#000"/></svg>
<div style="left:911px;top:245px;width:23px;height:23px;border:1px solid #a0a0a0;box-sizing:border-box;background:#f0f0f0;box-shadow:inset 1px 1px #fff,1px 1px #fff;"></div>
<svg style="left:916px;top:250px" width="14" height="12"><path d="M2 6.5L5.5 10L12 3" fill="none" stroke="#000" stroke-width="4" stroke-linejoin="miter"/><path d="M2 6.5L5.5 10L12 3" fill="none" stroke="#0000ff" stroke-width="2"/></svg>
<div style="left:937px;top:245px;width:23px;height:23px;border:1px solid #a0a0a0;box-sizing:border-box;background:#f0f0f0;box-shadow:inset 1px 1px #fff,1px 1px #fff;"></div>
<svg style="left:943px;top:252px" width="12" height="12"><path d="M1.5 1.5L10.5 10.5M10.5 1.5L1.5 10.5" fill="none" stroke="#000" stroke-width="4"/><path d="M1.5 1.5L10.5 10.5M10.5 1.5L1.5 10.5" fill="none" stroke="#ff0000" stroke-width="2"/></svg>
<div style="left:969px;top:245px;width:23px;height:23px;border:1px solid #a0a0a0;box-sizing:border-box;background:#f0f0f0;box-shadow:inset 1px 1px #fff,1px 1px #fff;"></div>
<svg style="left:974px;top:250px" width="14" height="15"><path d="M1.5 1.8h11l-4 5v6.4h-3v-6.4z" fill="#94a4d4" stroke="#000" stroke-width="1.3" stroke-linejoin="round"/><path d="M1.2 1.6h11.6" stroke="#000" stroke-width="2"/><path d="M4 3h3.5l-1.2 2z" fill="#c8d0ec"/></svg>
<div style="left:1001px;top:245px;width:71px;height:23px;border:1px solid #a0a0a0;box-sizing:border-box;background:#f0f0f0;box-shadow:inset 1px 1px #fff,1px 1px #fff;"></div>
<div class="t" style="left:1010px;top:250px;">Release</div>
<div style="left:1075px;top:245px;width:62px;height:23px;border:1px solid #a0a0a0;box-sizing:border-box;background:#f0f0f0;box-shadow:inset 1px 1px #fff,1px 1px #fff;"></div>
<div class="t" style="left:1084px;top:250px;">Renew</div>
<div style="left:1254px;top:246px;width:70px;height:21px;background:#fff;border:1px solid #a0a0a0;box-sizing:border-box"></div>
<div class="t" style="left:1259px;top:249px;color:#a0a0b0;font-style:italic">Find</div>
<div style="left:853px;top:272px;width:472px;height:244px;background:#fff;border:1px solid #a0a0a0;border-bottom:none;box-sizing:border-box"></div>
<div style="left:853px;top:272px;width:472px;height:17px;background:#f0f0f0;border-top:1px solid #a0a0a0;border-left:1px solid #a0a0a0;border-right:1px solid #a0a0a0;border-bottom:1px solid #a0a0a0;box-sizing:border-box;box-shadow:inset 1px 1px #fff"></div>
<div style="left:885px;top:272px;width:1px;height:17px;background:#a0a0a0"></div>
<div style="left:886px;top:273px;width:1px;height:15px;background:#fff"></div>
<div style="left:985px;top:272px;width:1px;height:17px;background:#a0a0a0"></div>
<div style="left:986px;top:273px;width:1px;height:15px;background:#fff"></div>
<div style="left:1030px;top:272px;width:1px;height:17px;background:#a0a0a0"></div>
<div style="left:1031px;top:273px;width:1px;height:15px;background:#fff"></div>
<div style="left:1075px;top:272px;width:1px;height:17px;background:#a0a0a0"></div>
<div style="left:1076px;top:273px;width:1px;height:15px;background:#fff"></div>
<div style="left:1204px;top:272px;width:1px;height:17px;background:#a0a0a0"></div>
<div style="left:1205px;top:273px;width:1px;height:15px;background:#fff"></div>
<div style="left:1284px;top:272px;width:1px;height:17px;background:#a0a0a0"></div>
<div style="left:1285px;top:273px;width:1px;height:15px;background:#fff"></div>
<div style="left:1308px;top:272px;width:1px;height:17px;background:#a0a0a0"></div>
<div style="left:1309px;top:273px;width:1px;height:15px;background:#fff"></div>
<div style="left:886px;top:273px;width:99px;height:15px;overflow:hidden"><div class="t" style="left:2px;top:0px">Interface</div></div>
<div style="left:986px;top:273px;width:44px;height:15px;overflow:hidden"><div class="t" style="left:2px;top:0px">Use ...</div></div>
<div style="left:1031px;top:273px;width:44px;height:15px;overflow:hidden"><div class="t" style="left:2px;top:0px">Add ...</div></div>
<div style="left:1076px;top:273px;width:128px;height:15px;overflow:hidden"><div class="t" style="left:2px;top:0px">IP Address</div></div>
<div style="left:1205px;top:273px;width:79px;height:15px;overflow:hidden"><div class="t" style="left:2px;top:0px">Expires After</div></div>
<div style="left:1285px;top:273px;width:23px;height:15px;overflow:hidden"><div class="t" style="left:2px;top:0px">Status</div></div>
<svg style="left:1311px;top:279px" width="9" height="5"><path d="M0 0h9l-4.5 5z" fill="#000"/></svg>
<svg style="left:974px;top:277px" width="10" height="10"><path d="M4.5 2L1.5 7.5" stroke="#909090" stroke-width="1.3" fill="none"/><path d="M4.6 1.5L8.5 8.5H1" stroke="#fff" stroke-width="1.3" fill="none"/></svg>
<div style="left:854px;top:303px;width:470px;height:1px;background:#e4e4e4"></div>
<div style="left:885px;top:289px;width:1px;height:15px;background:#e4e4e4"></div>
<div style="left:985px;top:289px;width:1px;height:15px;background:#e4e4e4"></div>
<div style="left:1030px;top:289px;width:1px;height:15px;background:#e4e4e4"></div>
<div style="left:1075px;top:289px;width:1px;height:15px;background:#e4e4e4"></div>
<div style="left:1204px;top:289px;width:1px;height:15px;background:#e4e4e4"></div>
<div style="left:1284px;top:289px;width:1px;height:15px;background:#e4e4e4"></div>
<div style="left:886px;top:289px;width:99px;height:14px;overflow:hidden"><div class="t" style="left:3px;top:1px;font-style:italic;letter-spacing:-0.15px">ether1-gateway</div></div>
<div style="left:986px;top:289px;width:44px;height:14px;overflow:hidden"><div class="t" style="left:3px;top:1px;">yes</div></div>
<div style="left:1031px;top:289px;width:44px;height:14px;overflow:hidden"><div class="t" style="left:3px;top:1px;">yes</div></div>
<div style="left:1076px;top:289px;width:128px;height:14px;overflow:hidden"><div class="t" style="left:2px;top:1px;"></div></div>
<div style="left:1205px;top:289px;width:79px;height:14px;overflow:hidden"><div class="t" style="right:2px;top:1px;"></div></div>
<div style="left:1285px;top:289px;width:39px;height:14px;overflow:hidden"><div class="t" style="left:3px;top:1px;">searching...</div></div>
<div style="left:854px;top:304px;width:470px;height:15px;background:#9dc0ea"></div>
<div style="left:854px;top:318px;width:470px;height:1px;background:#e4e4e4"></div>
<div style="left:885px;top:304px;width:1px;height:15px;background:#c8d8ea"></div>
<div style="left:985px;top:304px;width:1px;height:15px;background:#c8d8ea"></div>
<div style="left:1030px;top:304px;width:1px;height:15px;background:#c8d8ea"></div>
<div style="left:1075px;top:304px;width:1px;height:15px;background:#c8d8ea"></div>
<div style="left:1204px;top:304px;width:1px;height:15px;background:#c8d8ea"></div>
<div style="left:1284px;top:304px;width:1px;height:15px;background:#c8d8ea"></div>
<div style="left:886px;top:304px;width:99px;height:14px;overflow:hidden"><div class="t" style="left:3px;top:1px;">lte1</div></div>
<div style="left:986px;top:304px;width:44px;height:14px;overflow:hidden"><div class="t" style="left:3px;top:1px;">yes</div></div>
<div style="left:1031px;top:304px;width:44px;height:14px;overflow:hidden"><div class="t" style="left:3px;top:1px;">yes</div></div>
<div style="left:1076px;top:304px;width:128px;height:14px;overflow:hidden"><div class="t" style="left:2px;top:1px;">172.16.0.10/24</div></div>
<div style="left:1205px;top:304px;width:79px;height:14px;overflow:hidden"><div class="t" style="right:2px;top:1px;">00:03:34</div></div>
<div style="left:1285px;top:304px;width:39px;height:14px;overflow:hidden"><div class="t" style="left:3px;top:1px;">bound</div></div>
<div style="left:853px;top:516px;width:472px;height:17px;background:#f0f0f0;border:1px solid #a0a0a0;box-sizing:border-box"></div>
<div style="left:1281px;top:517px;width:27px;height:15px;background:#d8d8d8;border-left:1px solid #a0a0a0;border-right:1px solid #a0a0a0;box-sizing:border-box"></div>
<svg style="left:1313px;top:520px" width="7" height="10"><path d="M7 4.5L3 0.5v2h-2.5v5h2.5v2z" fill="#000"/></svg>
<div style="left:853px;top:533px;width:474px;height:23px;border-left:1px solid #a0a0a0;border-bottom:1px solid #f8f8f8;box-sizing:border-box"></div>
<div style="left:220px;top:482px;width:918px;height:382px;background:#000"></div>
<div style="left:221px;top:483px;width:916px;height:380px;background:#f0f0f0"></div>
<div style="left:221px;top:483px;width:916px;height:25px;background:#c0c0c0;border-top:1px solid #d0d0d0;box-sizing:border-box"></div>
<div style="left:221px;top:508px;width:1px;height:355px;background:#fff"></div>
<div class="t" style="left:226px;top:490px;color:#fff">Bridge</div>
<div style="left:1101px;top:488px;width:15px;height:15px;border:1px solid #333;box-sizing:border-box;background:#eceaec;box-shadow:inset 1px 1px #fff"></div>
<div style="left:1104px;top:491px;width:9px;height:9px;border:1px solid #333;border-top-width:2px;box-sizing:border-box"></div>
<div style="left:1118px;top:488px;width:15px;height:15px;border:1px solid #333;box-sizing:border-box;background:#eceaec;box-shadow:inset 1px 1px #fff"></div>
<svg style="left:1118px;top:488px" width="15" height="15"><path d="M5 5L10 10M10 5L5 10" stroke="#333" stroke-width="2.3" stroke-linecap="round"/></svg>
<div style="left:226px;top:513px;width:49px;height:22px;background:#d8d8d8;border-right:1px solid #c4c4c4;box-sizing:border-box"></div>
<div class="t" style="left:231px;top:517px;">Bridge</div>
<div style="left:275px;top:510px;width:47px;height:25px;background:#f0f0f0;border-left:1px solid #fff;border-top:1px solid #fff;border-right:1px solid #a0a0a0;box-sizing:border-box"></div>
<div class="t" style="left:283px;top:515px;">Ports</div>
<div style="left:322px;top:513px;width:46px;height:22px;background:#d8d8d8;border-right:1px solid #c4c4c4;box-sizing:border-box"></div>
<div class="t" style="left:326px;top:517px;">Filters</div>
<div style="left:368px;top:513px;width:40px;height:22px;background:#d8d8d8;border-right:1px solid #c4c4c4;box-sizing:border-box"></div>
<div class="t" style="left:373px;top:517px;">NAT</div>
<div style="left:408px;top:513px;width:47px;height:22px;background:#d8d8d8;border-right:1px solid #c4c4c4;box-sizing:border-box"></div>
<div class="t" style="left:413px;top:517px;">Hosts</div>
<div style="left:223px;top:535px;width:911px;height:1px;background:#fff"></div>
<div style="left:1133px;top:535px;width:1px;height:325px;background:#a0a0a0"></div>
<div style="left:225px;top:539px;width:23px;height:23px;border:1px solid #a0a0a0;box-sizing:border-box;background:#f0f0f0;box-shadow:inset 1px 1px #fff,1px 1px #fff;"></div>
<svg style="left:231px;top:545px" width="22" height="12" shape-rendering="crispEdges"><path d="M4.5 0.5h3v4h4v3h-4v4h-3v-4h-4v-3h4z" fill="#ff0000" stroke="#000"/></svg>
<div style="left:251px;top:539px;width:23px;height:23px;border:1px solid #a0a0a0;box-sizing:border-box;background:#f0f0f0;box-shadow:inset 1px 1px #fff,1px 1px #fff;"></div>
<svg style="left:257px;top:549px" width="12" height="4" shape-rendering="crispEdges"><rect x="0.5" y="0.5" width="11" height="3" fill="#0000ff" stroke="#000"/></svg>
<div style="left:283px;top:539px;width:23px;height:23px;border:1px solid #a0a0a0;box-sizing:border-box;background:#f0f0f0;box-shadow:inset 1px 1px #fff,1px 1px #fff;"></div>
<svg style="left:288px;top:544px" width="14" height="12"><path d="M2 6.5L5.5 10L12 3" fill="none" stroke="#000" stroke-width="4" stroke-linejoin="miter"/><path d="M2 6.5L5.5 10L12 3" fill="none" stroke="#0000ff" stroke-width="2"/></svg>
<div style="left:309px;top:539px;width:23px;height:23px;border:1px solid #a0a0a0;box-sizing:border-box;background:#f0f0f0;box-shadow:inset 1px 1px #fff,1px 1px #fff;"></div>
<svg style="left:315px;top:546px" width="12" height="12"><path d="M1.5 1.5L10.5 10.5M10.5 1.5L1.5 10.5" fill="none" stroke="#000" stroke-width="4"/><path d="M1.5 1.5L10.5 10.5M10.5 1.5L1.5 10.5" fill="none" stroke="#ff0000" stroke-width="2"/></svg>
<div style="left:341px;top:539px;width:23px;height:23px;border:1px solid #a0a0a0;box-sizing:border-box;background:#f0f0f0;box-shadow:inset 1px 1px #fff,1px 1px #fff;"></div>
<svg style="left:346px;top:546px" width="14" height="11" shape-rendering="crispEdges"><path d="M3.5 0.5h9v9h-12v-6z" fill="#ffff00" stroke="#000"/><rect x="6" y="2" width="2" height="1" fill="#a0a0c0"/><rect x="9" y="2" width="2" height="1" fill="#a0a0c0"/><rect x="3" y="4" width="2" height="1" fill="#a0a0c0"/><rect x="6" y="4" width="2" height="1" fill="#a0a0c0"/><rect x="9" y="4" width="2" height="1" fill="#a0a0c0"/><rect x="2" y="2" width="1" height="1" fill="#000"/></svg>
<div style="left:373px;top:539px;width:23px;height:23px;border:1px solid #a0a0a0;box-sizing:border-box;background:#f0f0f0;box-shadow:inset 1px 1px #fff,1px 1px #fff;"></div>
<svg style="left:378px;top:544px" width="14" height="15"><path d="M1.5 1.8h11l-4 5v6.4h-3v-6.4z" fill="#94a4d4" stroke="#000" stroke-width="1.3" stroke-linejoin="round"/><path d="M1.2 1.6h11.6" stroke="#000" stroke-width="2"/><path d="M4 3h3.5l-1.2 2z" fill="#c8d0ec"/></svg>
<div style="left:1061px;top:540px;width:70px;height:21px;background:#fff;border:1px solid #a0a0a0;box-sizing:border-box"></div>
<div class="t" style="left:1066px;top:543px;color:#a0a0b0;font-style:italic">Find</div>
<div style="left:225px;top:565px;width:907px;height:270px;background:#fff;border:1px solid #a0a0a0;border-bottom:none;box-sizing:border-box"></div>
<div style="left:225px;top:565px;width:907px;height:18px;background:#f0f0f0;border-top:1px solid #a0a0a0;border-left:1px solid #a0a0a0;border-right:1px solid #a0a0a0;border-bottom:1px solid #a0a0a0;box-sizing:border-box;box-shadow:inset 1px 1px #fff"></div>
<div style="left:257px;top:565px;width:1px;height:18px;background:#a0a0a0"></div>
<div style="left:258px;top:566px;width:1px;height:16px;background:#fff"></div>
<div style="left:435px;top:565px;width:1px;height:18px;background:#a0a0a0"></div>
<div style="left:436px;top:566px;width:1px;height:16px;background:#fff"></div>
<div style="left:535px;top:565px;width:1px;height:18px;background:#a0a0a0"></div>
<div style="left:536px;top:566px;width:1px;height:16px;background:#fff"></div>
<div style="left:595px;top:565px;width:1px;height:18px;background:#a0a0a0"></div>
<div style="left:596px;top:566px;width:1px;height:16px;background:#fff"></div>
<div style="left:655px;top:565px;width:1px;height:18px;background:#a0a0a0"></div>
<div style="left:656px;top:566px;width:1px;height:16px;background:#fff"></div>
<div style="left:1115px;top:565px;width:1px;height:18px;background:#a0a0a0"></div>
<div style="left:1116px;top:566px;width:1px;height:16px;background:#fff"></div>
<div class="t" style="left:260px;top:567px;">Interface</div>
<div class="t" style="left:438px;top:567px;">Bridge</div>
<div class="t" style="left:538px;top:567px;">Priority ...</div>
<div class="t" style="left:598px;top:567px;">Path Co...</div>
<svg style="left:1119px;top:571px" width="9" height="5"><path d="M0 0h9l-4.5 5z" fill="#000"/></svg>
<svg style="left:424px;top:570px" width="10" height="10"><path d="M4.5 2L1.5 7.5" stroke="#909090" stroke-width="1.3" fill="none"/><path d="M4.6 1.5L8.5 8.5H1" stroke="#fff" stroke-width="1.3" fill="none"/></svg>
<div style="left:226px;top:597px;width:905px;height:1px;background:#e4e4e4"></div>
<div style="left:257px;top:583px;width:1px;height:15px;background:#e4e4e4"></div>
<div style="left:435px;top:583px;width:1px;height:15px;background:#e4e4e4"></div>
<div style="left:535px;top:583px;width:1px;height:15px;background:#e4e4e4"></div>
<div style="left:595px;top:583px;width:1px;height:15px;background:#e4e4e4"></div>
<div style="left:655px;top:583px;width:1px;height:15px;background:#e4e4e4"></div>
<div style="left:1115px;top:583px;width:1px;height:15px;background:#e4e4e4"></div>
<div style="left:226px;top:583px;width:31px;height:14px;overflow:hidden"><div class="t" style="left:2px;top:1px;"></div></div>
<div style="left:258px;top:583px;width:177px;height:14px;overflow:hidden"><div class="t" style="left:18px;top:1px;">ether2-master-local</div></div>
<svg style="left:260px;top:584px" width="15" height="10" shape-rendering="crispEdges"><rect x="3" y="0" width="1" height="7" fill="#000"/><rect x="11" y="0" width="1" height="7" fill="#000"/><rect x="2" y="2" width="3" height="2" fill="#000"/><rect x="10" y="2" width="3" height="2" fill="#000"/><rect x="5" y="3" width="5" height="1" fill="#000"/><rect x="1" y="4" width="1" height="1" fill="#000"/><rect x="0" y="5" width="1" height="1" fill="#000"/><rect x="13" y="4" width="1" height="1" fill="#000"/><rect x="14" y="5" width="1" height="1" fill="#000"/><rect x="1" y="7" width="13" height="1" fill="#8b0000"/><rect x="1" y="8" width="4" height="1" fill="#8b0000"/><rect x="10" y="8" width="4" height="1" fill="#8b0000"/></svg>
<div style="left:436px;top:583px;width:99px;height:14px;overflow:hidden"><div class="t" style="left:2px;top:1px;">bridge-local</div></div>
<div style="left:536px;top:583px;width:59px;height:14px;overflow:hidden"><div class="t" style="right:2px;top:1px;">80</div></div>
<div style="left:596px;top:583px;width:59px;height:14px;overflow:hidden"><div class="t" style="right:2px;top:1px;">10</div></div>
<div style="left:226px;top:598px;width:905px;height:15px;background:#9dc0ea"></div>
<div style="left:226px;top:612px;width:905px;height:1px;background:#e4e4e4"></div>
<div style="left:257px;top:598px;width:1px;height:15px;background:#c8d8ea"></div>
<div style="left:435px;top:598px;width:1px;height:15px;background:#c8d8ea"></div>
<div style="left:535px;top:598px;width:1px;height:15px;background:#c8d8ea"></div>
<div style="left:595px;top:598px;width:1px;height:15px;background:#c8d8ea"></div>
<div style="left:655px;top:598px;width:1px;height:15px;background:#c8d8ea"></div>
<div style="left:1115px;top:598px;width:1px;height:15px;background:#c8d8ea"></div>
<div style="left:226px;top:598px;width:31px;height:14px;overflow:hidden"><div class="t" style="left:2px;top:1px;">I</div></div>
<div style="left:258px;top:598px;width:177px;height:14px;overflow:hidden"><div class="t" style="left:18px;top:1px;font-style:italic;letter-spacing:-0.15px">ether5</div></div>
<svg style="left:260px;top:599px" width="15" height="10" shape-rendering="crispEdges"><rect x="3" y="0" width="1" height="7" fill="#000"/><rect x="11" y="0" width="1" height="7" fill="#000"/><rect x="2" y="2" width="3" height="2" fill="#000"/><rect x="10" y="2" width="3" height="2" fill="#000"/><rect x="5" y="3" width="5" height="1" fill="#000"/><rect x="1" y="4" width="1" height="1" fill="#000"/><rect x="0" y="5" width="1" height="1" fill="#000"/><rect x="13" y="4" width="1" height="1" fill="#000"/><rect x="14" y="5" width="1" height="1" fill="#000"/><rect x="1" y="7" width="13" height="1" fill="#8b0000"/><rect x="1" y="8" width="4" height="1" fill="#8b0000"/><rect x="10" y="8" width="4" height="1" fill="#8b0000"/></svg>
<div style="left:436px;top:598px;width:99px;height:14px;overflow:hidden"><div class="t" style="left:2px;top:1px;">bridge_LTE</div></div>
<div style="left:536px;top:598px;width:59px;height:14px;overflow:hidden"><div class="t" style="right:2px;top:1px;">80</div></div>
<div style="left:596px;top:598px;width:59px;height:14px;overflow:hidden"><div class="t" style="right:2px;top:1px;">10</div></div>
<div style="left:226px;top:627px;width:905px;height:1px;background:#e4e4e4"></div>
<div style="left:257px;top:613px;width:1px;height:15px;background:#e4e4e4"></div>
<div style="left:435px;top:613px;width:1px;height:15px;background:#e4e4e4"></div>
<div style="left:535px;top:613px;width:1px;height:15px;background:#e4e4e4"></div>
<div style="left:595px;top:613px;width:1px;height:15px;background:#e4e4e4"></div>
<div style="left:655px;top:613px;width:1px;height:15px;background:#e4e4e4"></div>
<div style="left:1115px;top:613px;width:1px;height:15px;background:#e4e4e4"></div>
<div style="left:226px;top:613px;width:31px;height:14px;overflow:hidden"><div class="t" style="left:2px;top:1px;">I</div></div>
<div style="left:258px;top:613px;width:177px;height:14px;overflow:hidden"><div class="t" style="left:18px;top:1px;font-style:italic;letter-spacing:-0.15px">wlan1</div></div>
<svg style="left:260px;top:614px" width="15" height="10" shape-rendering="crispEdges"><rect x="3" y="0" width="1" height="7" fill="#000"/><rect x="11" y="0" width="1" height="7" fill="#000"/><rect x="2" y="2" width="3" height="2" fill="#000"/><rect x="10" y="2" width="3" height="2" fill="#000"/><rect x="5" y="3" width="5" height="1" fill="#000"/><rect x="1" y="4" width="1" height="1" fill="#000"/><rect x="0" y="5" width="1" height="1" fill="#000"/><rect x="13" y="4" width="1" height="1" fill="#000"/><rect x="14" y="5" width="1" height="1" fill="#000"/><rect x="1" y="7" width="13" height="1" fill="#8b0000"/><rect x="1" y="8" width="4" height="1" fill="#8b0000"/><rect x="10" y="8" width="4" height="1" fill="#8b0000"/></svg>
<div style="left:436px;top:613px;width:99px;height:14px;overflow:hidden"><div class="t" style="left:2px;top:1px;">bridge-local</div></div>
<div style="left:536px;top:613px;width:59px;height:14px;overflow:hidden"><div class="t" style="right:2px;top:1px;">80</div></div>
<div style="left:596px;top:613px;width:59px;height:14px;overflow:hidden"><div class="t" style="right:2px;top:1px;">10</div></div>
<div style="left:225px;top:835px;width:909px;height:25px;border-left:1px solid #a0a0a0;border-bottom:1px solid #a0a0a0;border-top:1px solid #a0a0a0;box-sizing:border-box"></div>
<div class="t" style="left:227px;top:839px;">3 items (1 selected)</div>
<div style="left:657px;top:369px;width:469px;height:471px;background:#000"></div>
<div style="left:658px;top:370px;width:467px;height:469px;background:#f0f0f0"></div>
<div style="left:658px;top:370px;width:467px;height:25px;background:#4e50cc;border-top:1px solid #8080e0;box-sizing:border-box"></div>
<div style="left:658px;top:395px;width:1px;height:444px;background:#fff"></div>
<div class="t" style="left:663px;top:377px;color:#fff">New Bridge Port</div>
<div style="left:1089px;top:375px;width:15px;height:15px;border:1px solid #333;box-sizing:border-box;background:#eceaec;box-shadow:inset 1px 1px #fff"></div>
<div style="left:1092px;top:378px;width:9px;height:9px;border:1px solid #333;border-top-width:2px;box-sizing:border-box"></div>
<div style="left:1106px;top:375px;width:15px;height:15px;border:1px solid #333;box-sizing:border-box;background:#eceaec;box-shadow:inset 1px 1px #fff"></div>
<svg style="left:1106px;top:375px" width="15" height="15"><path d="M5 5L10 10M10 5L5 10" stroke="#333" stroke-width="2.3" stroke-linecap="round"/></svg>
<div style="left:660px;top:397px;width:64px;height:25px;background:#f0f0f0;border-left:1px solid #fff;border-top:1px solid #fff;border-right:1px solid #a0a0a0;box-sizing:border-box"></div>
<div class="t" style="left:668px;top:402px;">General</div>
<div style="left:724px;top:399px;width:47px;height:23px;background:#d8d8d8;border-right:1px solid #c4c4c4;box-sizing:border-box"></div>
<div class="t" style="left:728px;top:404px;">Status</div>
<div style="left:660px;top:422px;width:372px;height:389px;border-right:1px solid #a0a0a0;border-bottom:1px solid #a0a0a0;box-sizing:border-box"></div>
<div style="left:660px;top:422px;width:372px;height:1px;background:#fff"></div>
<div class="t" style="right:580px;top:434px;color:#0000ff">Interface:</div>
<div style="left:760px;top:430px;width:240px;height:21px;background:#fff;border:1px solid #a0a0a0;box-sizing:border-box"></div>
<div class="t" style="left:764px;top:433px;font-style:italic;letter-spacing:-0.15px">ether1-gateway</div>
<div style="left:1001px;top:430px;width:22px;height:21px;background:#f0f0f0;border:1px solid #a0a0a0;box-sizing:border-box;box-shadow:inset 1px 1px #fff"></div>
<svg style="left:1007px;top:437px" width="9" height="9" shape-rendering="crispEdges"><rect x="1" y="0" width="7" height="1" fill="#000"/><rect x="3" y="2" width="3" height="3" fill="#000"/><path d="M0.5 4.5h8l-4 4z" fill="#000" shape-rendering="auto"/></svg>
<div class="t" style="right:580px;top:462px;color:#0000ff">Bridge:</div>
<div style="left:668px;top:488px;width:355px;height:1px;background:#dcdcdc"></div>
<div class="t" style="right:580px;top:500px;color:#000">Priority:</div>
<div class="t" style="right:583px;top:528px;color:#000">Path Cost</div>
<div class="t" style="left:750px;top:528px;">:</div>
<div class="t" style="right:580px;top:556px;color:#000">Horizon:</div>
<div style="left:760px;top:552px;width:245px;height:21px;background:#f0f0f0;border:1px solid #a0a0a0;box-sizing:border-box"></div>
<svg style="left:1010px;top:560px" width="9" height="5"><path d="M0 0h9l-4.5 5z" fill="#000"/></svg>
<div style="left:668px;top:582px;width:355px;height:1px;background:#dcdcdc"></div>
<div class="t" style="right:580px;top:594px;color:#000">Edge:</div>
<div style="left:760px;top:591px;width:240px;height:21px;background:#fff;border:1px solid #a0a0a0;box-sizing:border-box"></div>
<div class="t" style="left:762px;top:594px;">auto</div>
<div style="left:1001px;top:591px;width:22px;height:21px;background:#f0f0f0;border:1px solid #a0a0a0;box-sizing:border-box;box-shadow:inset 1px 1px #fff"></div>
<svg style="left:1007px;top:598px" width="9" height="9" shape-rendering="crispEdges"><rect x="1" y="0" width="7" height="1" fill="#000"/><rect x="3" y="2" width="3" height="3" fill="#000"/><path d="M0.5 4.5h8l-4 4z" fill="#000" shape-rendering="auto"/></svg>
<div class="t" style="right:580px;top:622px;color:#000">Point To Point:</div>
<div style="left:760px;top:619px;width:240px;height:21px;background:#fff;border:1px solid #a0a0a0;box-sizing:border-box"></div>
<div class="t" style="left:762px;top:622px;">auto</div>
<div style="left:1001px;top:619px;width:22px;height:21px;background:#f0f0f0;border:1px solid #a0a0a0;box-sizing:border-box;box-shadow:inset 1px 1px #fff"></div>
<svg style="left:1007px;top:626px" width="9" height="9" shape-rendering="crispEdges"><rect x="1" y="0" width="7" height="1" fill="#000"/><rect x="3" y="2" width="3" height="3" fill="#000"/><path d="M0.5 4.5h8l-4 4z" fill="#000" shape-rendering="auto"/></svg>
<div class="t" style="right:580px;top:650px;color:#000">External FDB:</div>
<div style="left:760px;top:647px;width:240px;height:21px;background:#fff;border:1px solid #a0a0a0;box-sizing:border-box"></div>
<div class="t" style="left:762px;top:650px;">auto</div>
<div style="left:1001px;top:647px;width:22px;height:21px;background:#f0f0f0;border:1px solid #a0a0a0;box-sizing:border-box;box-shadow:inset 1px 1px #fff"></div>
<svg style="left:1007px;top:654px" width="9" height="9" shape-rendering="crispEdges"><rect x="1" y="0" width="7" height="1" fill="#000"/><rect x="3" y="2" width="3" height="3" fill="#000"/><path d="M0.5 4.5h8l-4 4z" fill="#000" shape-rendering="auto"/></svg>
<div style="left:1042px;top:400px;width:76px;height:23px;background:#f0f0f0;border:1px solid #000;box-sizing:border-box;box-shadow:inset 1px 1px #fff"></div>
<div class="t" style="left:1042px;width:76px;text-align:center;top:405px;">OK</div>
<div style="left:1042px;top:426px;width:76px;height:23px;background:#f0f0f0;border:1px solid #a0a0a0;box-sizing:border-box;box-shadow:inset 1px 1px #fff"></div>
<div class="t" style="left:1042px;width:76px;text-align:center;top:431px;">Cancel</div>
<div style="left:1042px;top:452px;width:76px;height:23px;background:#f0f0f0;border:1px solid #a0a0a0;box-sizing:border-box;box-shadow:inset 1px 1px #fff"></div>
<div class="t" style="left:1042px;width:76px;text-align:center;top:457px;">Apply</div>
<div style="left:1042px;top:484px;width:76px;height:23px;background:#f0f0f0;border:1px solid #a0a0a0;box-sizing:border-box;box-shadow:inset 1px 1px #fff"></div>
<div class="t" style="left:1042px;width:76px;text-align:center;top:489px;">Disable</div>
<div style="left:1042px;top:510px;width:76px;height:23px;background:#f0f0f0;border:1px solid #a0a0a0;box-sizing:border-box;box-shadow:inset 1px 1px #fff"></div>
<div class="t" style="left:1042px;width:76px;text-align:center;top:515px;">Comment</div>
<div style="left:1042px;top:536px;width:76px;height:23px;background:#f0f0f0;border:1px solid #a0a0a0;box-sizing:border-box;box-shadow:inset 1px 1px #fff"></div>
<div class="t" style="left:1042px;width:76px;text-align:center;top:541px;">Copy</div>
<div style="left:1042px;top:562px;width:76px;height:23px;background:#f0f0f0;border:1px solid #a0a0a0;box-sizing:border-box;box-shadow:inset 1px 1px #fff"></div>
<div class="t" style="left:1042px;width:76px;text-align:center;top:567px;">Remove</div>
<div style="left:660px;top:813px;width:227px;height:22px;border-left:1px solid #a0a0a0;border-top:1px solid #a0a0a0;box-sizing:border-box"></div>
<div class="t" style="left:663px;top:817px;">enabled</div>
<div style="left:889px;top:813px;width:232px;height:22px;border-left:1px solid #a0a0a0;border-top:1px solid #a0a0a0;box-sizing:border-box"></div>
<div class="t" style="left:891px;top:817px;color:#a8a8a8">inactive</div>
<div style="left:759px;top:450px;width:281px;height:98px;background:#fff;border:1px solid #646464;box-sizing:border-box;box-shadow:1px 1px 0 #a0a0a0"></div>
<div style="left:760px;top:451px;width:279px;height:16px;background:#3399ff"></div>
<div class="t" style="left:763px;top:452px;font-style:italic;letter-spacing:-0.15px;color:#fff">ether1-gateway</div>
<div class="t" style="left:762px;top:468px;">ether2-master-local</div>
<div class="t" style="left:763px;top:484px;font-style:italic;letter-spacing:-0.15px">ether3-slave-local</div>
<div class="t" style="left:763px;top:500px;font-style:italic;letter-spacing:-0.15px">ether4-slave-local</div>
<div class="t" style="left:763px;top:516px;font-style:italic;letter-spacing:-0.15px">ether5</div>
<div class="t" style="left:763px;top:532px;font-style:italic;letter-spacing:-0.15px">wlan1</div>
</body></html>
